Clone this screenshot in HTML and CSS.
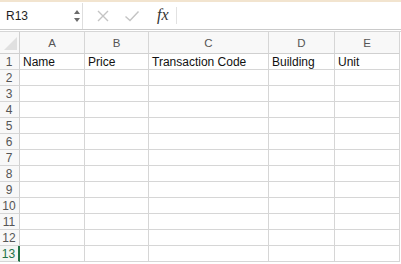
FILE: index.html
```html
<!DOCTYPE html>
<html>
<head>
<meta charset="utf-8">
<link rel="stylesheet" href="styles.css">
</head>
<body>
<div class="app">
  <div class="topline"></div>
  <div class="fbar">
    <div class="namebox">
      <span class="ref">R13</span>
      <svg class="spin" width="6" height="14" viewBox="0 0 6 14"><path d="M3 1 L6 5 L0 5 Z M3 13 L6 9 L0 9 Z" fill="#6b6b6b"/></svg>
    </div>
    <div class="tools">
      <svg class="ic" width="14" height="14" viewBox="0 0 14 14"><path d="M2 2 L12 12 M12 2 L2 12" stroke="#c4c4c4" stroke-width="1.4" fill="none"/></svg>
      <svg class="ic" width="16" height="14" viewBox="0 0 16 14"><path d="M1.5 7.5 L6 11.5 L14.5 2.5" stroke="#c4c4c4" stroke-width="1.4" fill="none"/></svg>
      <span class="fx">fx</span>
      <span class="sep"></span>
    </div>
  </div>
  <div class="gap"></div>
  <div class="grid">
    <div class="corner"><svg width="20" height="22" viewBox="0 0 20 22"><path d="M4 18 L17 18 L17 5 Z" fill="#e0e0e0"/></svg></div>
    <div class="ch">A</div><div class="ch">B</div><div class="ch">C</div><div class="ch">D</div><div class="ch">E</div>

    <div class="rh">1</div><div class="c">Name</div><div class="c">Price</div><div class="c">Transaction Code</div><div class="c">Building</div><div class="c">Unit</div>
    <div class="rh">2</div><div class="c"></div><div class="c"></div><div class="c"></div><div class="c"></div><div class="c"></div>
    <div class="rh">3</div><div class="c"></div><div class="c"></div><div class="c"></div><div class="c"></div><div class="c"></div>
    <div class="rh">4</div><div class="c"></div><div class="c"></div><div class="c"></div><div class="c"></div><div class="c"></div>
    <div class="rh">5</div><div class="c"></div><div class="c"></div><div class="c"></div><div class="c"></div><div class="c"></div>
    <div class="rh">6</div><div class="c"></div><div class="c"></div><div class="c"></div><div class="c"></div><div class="c"></div>
    <div class="rh">7</div><div class="c"></div><div class="c"></div><div class="c"></div><div class="c"></div><div class="c"></div>
    <div class="rh">8</div><div class="c"></div><div class="c"></div><div class="c"></div><div class="c"></div><div class="c"></div>
    <div class="rh">9</div><div class="c"></div><div class="c"></div><div class="c"></div><div class="c"></div><div class="c"></div>
    <div class="rh">10</div><div class="c"></div><div class="c"></div><div class="c"></div><div class="c"></div><div class="c"></div>
    <div class="rh">11</div><div class="c"></div><div class="c"></div><div class="c"></div><div class="c"></div><div class="c"></div>
    <div class="rh">12</div><div class="c"></div><div class="c"></div><div class="c"></div><div class="c"></div><div class="c"></div>
    <div class="rh sel">13</div><div class="c"></div><div class="c"></div><div class="c"></div><div class="c"></div><div class="c"></div>
  </div>
</div>
</body>
</html>
```
FILE: styles.css
```css
* { box-sizing: border-box; }
html, body { margin: 0; padding: 0; background: #fff; }
body { font-family: "Liberation Sans", Arial, sans-serif; width: 401px; height: 264px; overflow: hidden; }
.app { width: 401px; }
.topline { height: 2px; background: #f2e4cf; }
.fbar { height: 28px; display: flex; align-items: center; border-bottom: 1px solid #cacaca; }
.namebox { width: 83px; height: 26px; display: flex; align-items: center; justify-content: space-between; padding: 0 2px 0 6px; border-right: 1px solid #dedede; }
.ref { font-size: 12px; color: #1e1e1e; }
.tools { display: flex; align-items: center; height: 100%; }
.ic { display: block; }
.tools .ic:first-child { margin-left: 13px; }
.tools .ic:nth-child(2) { margin-left: 14px; }
.fx { font-family: "Liberation Serif", serif; font-style: italic; font-size: 16px; color: #333; margin-left: 17px; margin-top: -2px; }
.sep { width: 1px; height: 17px; background: #e2e2e2; margin-left: 7px; }
.gap { height: 1px; background: #fff; }
.grid { display: grid; grid-template-columns: 20px 65px 64px 120px 66px 65px; grid-template-rows: 22px repeat(13, 16px); border-top: 1px solid #d6d6d6; }
.corner { background: #f8f8f8; border-right: 1px solid #d0d0d0; border-bottom: 1px solid #d0d0d0; height: 22px; overflow: hidden; }
.corner svg { display: block; }
.ch { background: #f8f8f8; border-right: 1px solid #d6d6d6; border-bottom: 1px solid #d0d0d0; font-size: 11.5px; color: #555; display: flex; align-items: center; justify-content: center; }
.rh { background: #f8f8f8; border-right: 1px solid #d0d0d0; border-bottom: 1px solid #d6d6d6; font-size: 12px; color: #555; display: flex; align-items: center; justify-content: center; padding-right: 1px; }
.rh.sel { color: #217346; border-right: 2px solid #217346; background: #f3f6f4; }
.c { border-right: 1px solid #d6d6d6; border-bottom: 1px solid #d6d6d6; font-size: 12px; color: #111; display: flex; align-items: center; padding-left: 3px; white-space: nowrap; overflow: hidden; }
```
